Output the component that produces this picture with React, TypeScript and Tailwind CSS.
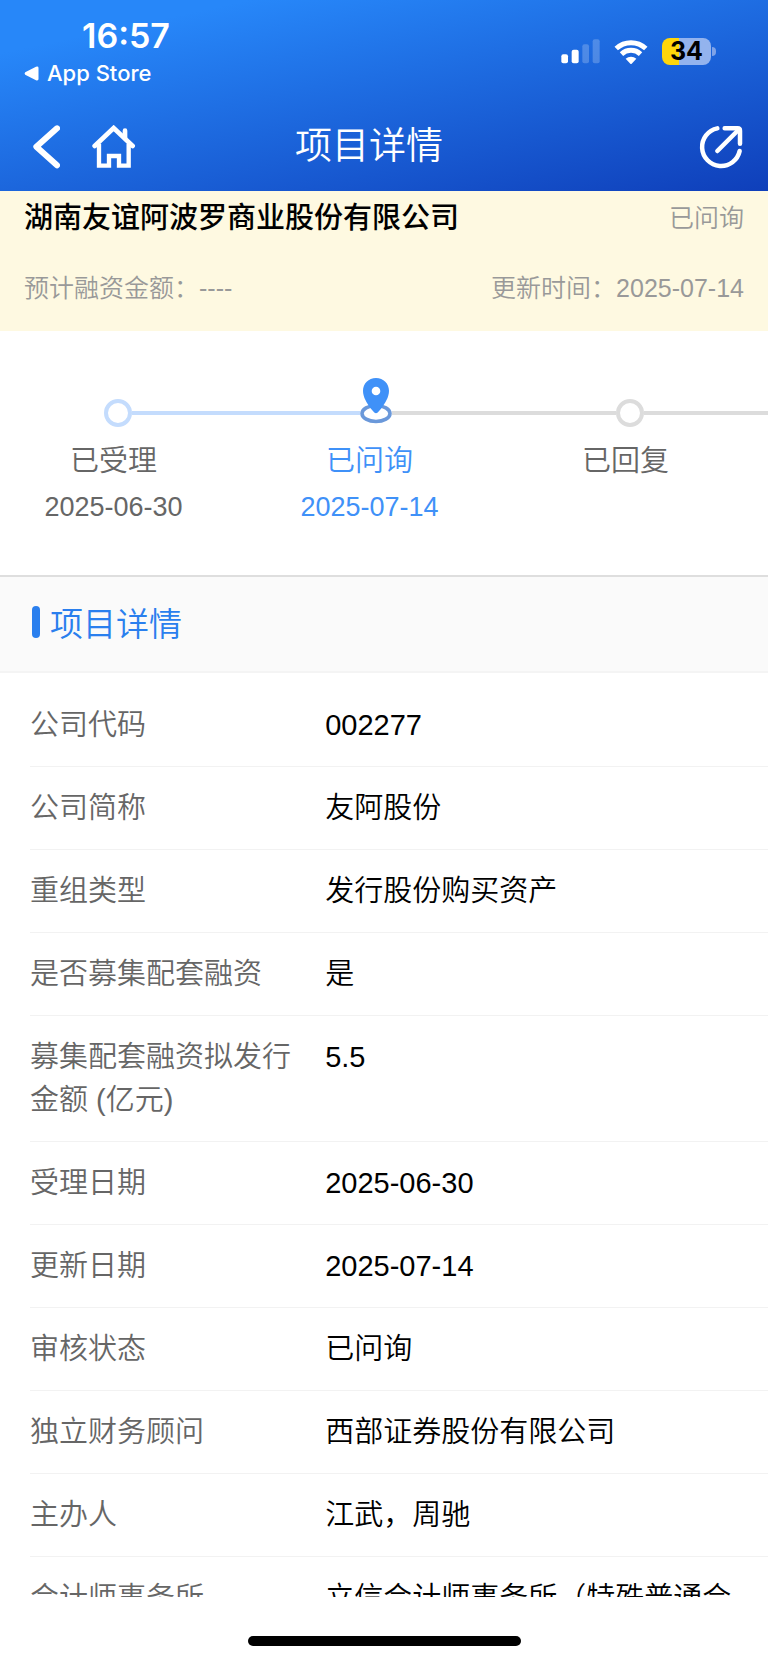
import type { ReactNode } from 'react';

type StepState = 'done' | 'current' | 'pending';

const steps: { name: string; date?: string; state: StepState }[] = [
  { name: '已受理', date: '2025-06-30', state: 'done' },
  { name: '已问询', date: '2025-07-14', state: 'current' },
  { name: '已回复', state: 'pending' },
];

const details: [string, string][] = [
  ['公司代码', '002277'],
  ['公司简称', '友阿股份'],
  ['重组类型', '发行股份购买资产'],
  ['是否募集配套融资', '是'],
  ['募集配套融资拟发行金额 (亿元)', '5.5'],
  ['受理日期', '2025-06-30'],
  ['更新日期', '2025-07-14'],
  ['审核状态', '已问询'],
  ['独立财务顾问', '西部证券股份有限公司'],
  ['主办人', '江武，周驰'],
  ['会计师事务所', '立信会计师事务所（特殊普通合'],
];

function SignalIcon() {
  return (
    <svg viewBox="532 116 117 75" className="h-[25px] w-[39px] fill-white" aria-hidden="true">
      <rect x="533" y="162" width="20" height="27" rx="6" />
      <rect x="564" y="148" width="21" height="41" rx="6" />
      <rect x="596" y="132" width="20" height="57" rx="6" opacity="0.22" />
      <rect x="627" y="117" width="21" height="72" rx="6" opacity="0.22" />
    </svg>
  );
}

function WifiIcon() {
  return (
    <svg viewBox="690 114 102 78" className="h-[26px] w-[34px]" aria-hidden="true">
      <g fill="none" stroke="#fff" strokeWidth="15">
        <path d="M696.7 142.5A65 65 0 0 1 785.3 142.5" />
        <path d="M712.4 159.3A42 42 0 0 1 769.6 159.3" />
      </g>
      <path d="M725 173A24 24 0 0 1 757 173L743 188Q741 190 739 188Z" fill="#fff" />
    </svg>
  );
}

function Battery() {
  return (
    <div className="flex items-center gap-px">
      <div className="flex h-[27px] w-[49px] items-center justify-center rounded-lg bg-linear-to-r from-[#ffd60a] from-35% to-[#93b3ee] to-35% font-[Inter,sans-serif] text-[25px] leading-none font-bold text-black">
        34
      </div>
      <div className="h-[9px] w-[4px] rounded-r-full bg-[#7fa3e8]" />
    </div>
  );
}

function BackIcon() {
  return (
    <svg viewBox="99 378 81 132" className="h-[44px] w-[27px]" aria-hidden="true">
      <path
        d="M171 388L109 443L171 499"
        fill="none"
        stroke="#fff"
        strokeWidth="18"
        strokeLinecap="round"
        strokeLinejoin="round"
      />
    </svg>
  );
}

function HomeIcon() {
  return (
    <svg viewBox="276 378 132 132" className="size-[44px]" aria-hidden="true">
      <g fill="none" stroke="#fff" strokeWidth="13" strokeLinecap="round">
        <path d="M284 441L341 387L398 441" strokeWidth="14" />
        <path d="M375 395V416" strokeWidth="14" />
        <path d="M297 434V500H327V471H357V500H386V434" strokeLinecap="butt" />
      </g>
    </svg>
  );
}

function ShareIcon() {
  return (
    <svg viewBox="944 371 132 132" className="size-[44px]" aria-hidden="true">
      <g fill="none" stroke="#fff" strokeWidth="13.5" strokeLinecap="round" strokeLinejoin="round">
        <path d="M999 381A57 57 0 1 0 1066 449" />
        <path d="M999 449L1062 386" />
        <path d="M1021 381H1060Q1067 381 1067 388V427" />
      </g>
    </svg>
  );
}

function PinIcon() {
  return (
    <svg viewBox="0 0 32 70" className="h-[70px] w-[32px] shrink-0" aria-hidden="true">
      <ellipse cx="16" cy="35.500" rx="14" ry="8" fill="#fff" stroke="#6a98da" strokeWidth="3.600" />
      <path
        d="M16 0C8.500 0 3 5.700 3 12.700C3 19.500 7 25 10.500 30.200L14.300 34.400Q16 36 17.700 34.400L21.500 30.200C25 25 29 19.500 29 12.700C29 5.700 23.500 0 16 0Z"
        fill="#3f91f8"
      />
      <circle cx="16" cy="13" r="4.300" fill="#fff" />
    </svg>
  );
}

const leftLine: Record<StepState, string> = {
  done: 'bg-transparent',
  current: 'bg-[#c4dcfd]',
  pending: 'bg-[#dcdcdc]',
};
const rightLine: Record<StepState, string> = {
  done: 'bg-[#c4dcfd]',
  current: 'bg-[#dcdcdc]',
  pending: 'bg-[#dcdcdc]',
};

function Step({ name, date, state }: { name: string; date?: string; state: StepState }) {
  return (
    <li className={state === 'current' ? 'text-[#3f91f8]' : 'text-[#666]'}>
      <div className="flex h-[60px] items-center">
        <div className={`h-1 w-[calc(50%-24px)] ${leftLine[state]}`} />
        {state === 'current' ? (
          <PinIcon />
        ) : (
          <div
            className={`size-[28px] shrink-0 rounded-full border-4 bg-white ${
              state === 'done' ? 'border-[#c4dcfd]' : 'border-[#dcdcdc]'
            }`}
          />
        )}
        <div className={`h-1 flex-1 ${rightLine[state]}`} />
      </div>
      <div className="flex flex-col gap-3 pt-px pr-[29px] text-center leading-[34px]">
        <span className="text-[29px]">{name}</span>
        {date && <time className="text-[27px]">{date}</time>}
      </div>
    </li>
  );
}

function IconButton({ label, children }: { label: string; children: ReactNode }) {
  return (
    <button type="button" aria-label={label} className="flex items-center">
      {children}
    </button>
  );
}

export default function App() {
  return (
    <div className="flex h-screen flex-col bg-white font-['Liberation_Sans','Noto_Sans_CJK_SC',sans-serif] font-[350] text-black">
      <header className="bg-linear-[168deg] from-[#2787f9] from-15% to-[#0f3fba] text-white">
        <div className="flex h-[103px] justify-between pr-[52px] pl-6 font-[Inter,sans-serif]">
          <div className="pt-[18px]">
            <div className="pl-[58px] text-[34px] leading-9 font-semibold">16:57</div>
            <a href="#" className="mt-[3px] flex items-center gap-2 text-[22px] leading-8 font-medium">
              <svg viewBox="0 0 15 15" className="size-[15px] fill-white" aria-hidden="true">
                <path d="M1.200 6.200L12 .700Q14.500 0 14.500 2V13Q14.500 15 12 14.300L1.200 8.800Q0 7.500 1.200 6.200Z" />
              </svg>
              App Store
            </a>
          </div>
          <div className="flex items-center gap-[14px]">
            <SignalIcon />
            <WifiIcon />
            <Battery />
          </div>
        </div>
        <nav className="grid h-[88px] grid-cols-[1fr_auto_1fr] items-center pr-[25px] pl-[33px]">
          <div className="flex gap-8">
            <IconButton label="返回">
              <BackIcon />
            </IconButton>
            <IconButton label="首页">
              <HomeIcon />
            </IconButton>
          </div>
          <h1 className="pr-[38px] text-[37px] leading-[54px]">项目详情</h1>
          <div className="flex justify-end">
            <IconButton label="分享">
              <ShareIcon />
            </IconButton>
          </div>
        </nav>
      </header>

      <main className="min-h-0 flex-1 overflow-y-auto [scrollbar-width:none]">
        <section className="h-[140px] bg-[#fef9e1] px-6 pt-[7px] text-[25px] text-[#999]">
          <div className="flex items-center justify-between leading-10">
            <h2 className="text-[29px] font-medium text-black">湖南友谊阿波罗商业股份有限公司</h2>
            <span>已问询</span>
          </div>
          <div className="mt-[30px] flex justify-between leading-10">
            <span>预计融资金额：----</span>
            <span>更新时间：2025-07-14</span>
          </div>
        </section>

        <ol className="grid grid-cols-3 pt-[52px] pb-[51px]">
          {steps.map((step) => (
            <Step key={step.name} {...step} />
          ))}
        </ol>

        <section>
          <div className="flex items-start gap-[10px] border-t-2 border-b-2 border-t-[#dedede] border-b-[#f4f4f4] bg-[#fafafa] pt-6 pb-[22px] pl-8">
            <span className="mt-[5px] h-8 w-2 rounded-full bg-[#2a7fee]" />
            <h2 className="text-[33px] leading-[48px] text-[#2a7fee]">项目详情</h2>
          </div>
          <dl className="pt-[11px] pl-[30px] text-[29px] leading-[43px]">
            {details.map(([label, value]) => (
              <div key={label} className="flex border-b border-[#f2f2f2] pt-5 pb-[19px]">
                <dt className="w-[40%] shrink-0 pr-3 text-[#666]">{label}</dt>
                <dd className="flex-1 pr-4">{value}</dd>
              </div>
            ))}
          </dl>
        </section>
      </main>

      <footer className="flex h-[66px] justify-center pt-[39px]">
        <div className="h-[10px] w-[273px] rounded-full bg-black" />
      </footer>
    </div>
  );
}
